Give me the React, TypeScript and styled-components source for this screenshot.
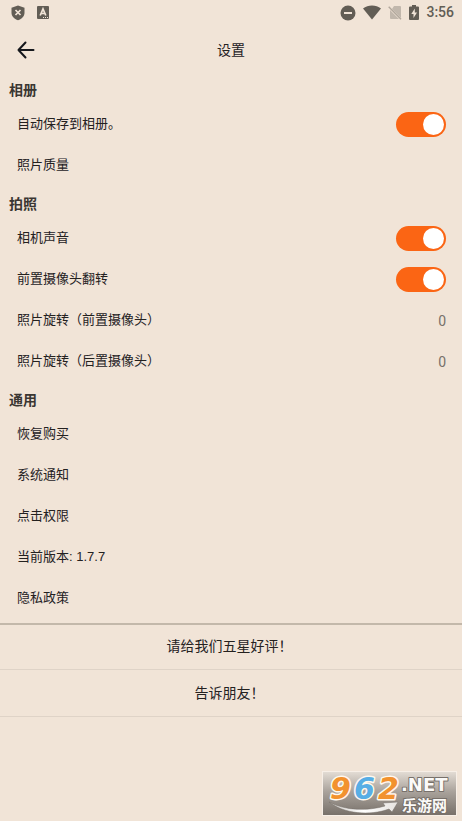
import React, { useState } from "react";
import styled, { createGlobalStyle } from "styled-components";

const GlobalStyle = createGlobalStyle`
  * { box-sizing: border-box; }
  body {
    margin: 0;
    background: #f1e4d7;
    color: #24211f;
    font-family: Roboto, "Noto Sans CJK SC", sans-serif;
  }
  button { font-family: inherit; color: inherit; }
`;

const Page = styled.div`
  position: relative;
  display: flex;
  flex-direction: column;
  min-height: 100vh;
`;

const StatusBar = styled.div`
  display: flex;
  align-items: center;
  justify-content: space-between;
  height: 25px;
  padding: 0 8px 0 10px;
  color: #625d55;
`;

const StatusGroup = styled.div<{ $gap: number }>`
  display: flex;
  align-items: center;
  gap: ${(p) => p.$gap}px;

  svg { display: block; }
`;

const Clock = styled.span`
  font-size: 14px;
  font-weight: 500;
  line-height: 25px;
`;

const Toolbar = styled.header`
  display: grid;
  grid-template-columns: 48px 1fr 48px;
  align-items: center;
  height: 50px;
`;

const BackButton = styled.button`
  display: flex;
  align-items: center;
  justify-content: center;
  height: 48px;
  padding: 0 0 0 4px;
  border: 0;
  background: none;
  color: #15171c;
`;

const Title = styled.h1`
  margin: 0;
  text-align: center;
  font-size: 14px;
  font-weight: 400;
  line-height: 20px;
`;

const Section = styled.section`
  & + & { margin-top: 3px; }
  &:last-of-type { padding-bottom: 4px; }
`;

const SectionTitle = styled.h2`
  margin: 0;
  padding: 1px 9px 0;
  font-size: 14px;
  font-weight: 700;
  line-height: 28px;
  color: #3a3632;
`;

const Row = styled.div`
  display: flex;
  align-items: center;
  justify-content: space-between;
  height: 41px;
  padding: 0 16px 0 17px;
  font-size: 13px;
`;

const RowButton = styled.button`
  display: flex;
  align-items: center;
  justify-content: space-between;
  width: 100%;
  height: 41px;
  padding: 0 16px 0 17px;
  border: 0;
  background: none;
  font-size: 13px;
  text-align: left;
`;

const RowLabel = styled.span`
  padding-bottom: 4px;
  font-family: "Liberation Sans", "Noto Sans CJK SC", sans-serif;
`;

const RowValue = styled.span`
  font-size: 14px;
  color: #77716a;
`;

const Switch = styled.input`
  appearance: none;
  display: flex;
  align-items: center;
  justify-content: flex-start;
  width: 50px;
  height: 25px;
  margin: 0;
  padding: 0 2px;
  border-radius: 13px;
  background: #b9b0a6;

  &::before {
    content: "";
    width: 21px;
    height: 21px;
    border-radius: 50%;
    background: #ffffff;
  }

  &:checked {
    justify-content: flex-end;
    background: #fb6514;
  }
`;

const Actions = styled.footer`
  border-top: 2px solid #c3b8aa;
`;

const ActionButton = styled.button`
  display: block;
  width: 100%;
  height: 47px;
  padding: 0 3px 0 0;
  border: 0;
  border-bottom: 1px solid #dfd3c7;
  background: none;
  font-size: 14px;
  line-height: 46px;

  &:first-child {
    height: 45px;
    line-height: 20px;
    padding-bottom: 2px;
  }
`;

const Watermark = styled.svg`
  position: absolute;
  right: 5px;
  bottom: 5px;
`;

const BackIcon = () => (
  <svg width="18" height="18" viewBox="0 0 18 18" fill="none" stroke="currentColor" strokeWidth="2" strokeLinecap="round" strokeLinejoin="round">
    <path d="M16.500 9H1.500M8.500 1.500L1.500 9l7 7.500" />
  </svg>
);

const ShieldIcon = () => (
  <svg width="16" height="16" viewBox="0 0 16 16">
    <path d="M8 .500l6.500 2.300v5c0 3.400-2.600 6.400-6.500 7.400-3.900-1-6.500-4-6.500-7.400v-5z" fill="currentColor" />
    <path d="M5.500 5l5 5m0-5l-5 5" stroke="#f1e4d7" strokeWidth="1.700" />
  </svg>
);

const LetterIcon = () => (
  <svg width="12" height="13" viewBox="0 0 12 13">
    <rect width="12" height="13" rx="1" fill="currentColor" />
    <path d="M3.200 9.500L6 3l2.800 6.500M4.200 7.500h3.600" fill="none" stroke="#f1e4d7" strokeWidth="1.700" />
    <path d="M6 11.500h1m1 0h1m1 0h1" stroke="#f1e4d7" />
  </svg>
);

const BlockIcon = () => (
  <svg width="16" height="16" viewBox="0 0 16 16">
    <circle cx="8" cy="8" r="7.500" fill="currentColor" />
    <path d="M4 8h8" stroke="#f1e4d7" strokeWidth="2" />
  </svg>
);

const WifiIcon = () => (
  <svg width="18" height="15" viewBox="0 0 18 15">
    <path d="M0 3.500C5 -.5 13 -.5 18 3.500L9 14.500z" fill="currentColor" />
  </svg>
);

const NoSimIcon = () => (
  <svg width="14" height="15" viewBox="0 0 14 15">
    <path d="M6 1h6a1 1 0 0 1 1 1v11L4 4zM2 5l9 9H3a1 1 0 0 1-1-1z" fill="#c1b7ac" />
    <path d="M.7 1.700l12.300 12.500" stroke="#b1a79c" strokeWidth="1.400" />
  </svg>
);

const BatteryIcon = () => (
  <svg width="10" height="15" viewBox="0 0 10 15">
    <path d="M3 0h4v1.500h2a1 1 0 0 1 1 1V14a1 1 0 0 1-1 1H1a1 1 0 0 1-1-1V2.500a1 1 0 0 1 1-1h2z" fill="currentColor" />
    <path d="M5.800 3.500L2.300 9h2.200v4L8 7.500H5.800z" fill="#f1e4d7" />
  </svg>
);

const SiteMark = () => (
  <Watermark width="135" height="45" viewBox="0 0 135 45" role="img" aria-label="962.NET 乐游网">
    <defs>
      <linearGradient id="plate" x1="0" y1="0" x2="0" y2="1">
        <stop offset="0" stopColor="#e4ddd5" />
        <stop offset="0.45" stopColor="#aaa39c" />
        <stop offset="1" stopColor="#777069" />
      </linearGradient>
      <linearGradient id="swoosh" x1="0" y1="0" x2="1" y2="0">
        <stop offset="0" stopColor="#c9c5c0" />
        <stop offset="0.5" stopColor="#ffffff" />
        <stop offset="1" stopColor="#e6e3df" />
      </linearGradient>
    </defs>
    <rect x="0.500" y="0.500" width="134" height="44" fill="url(#plate)" stroke="#f7efe7" />
    <path d="M7 31C24 40 46 40 63 35l-2-3 15-1-6 10-3-3C48 45 22 43 7 31z" fill="url(#swoosh)" stroke="#77706a" strokeWidth="0.500" />
    <g fontFamily="DejaVu Sans" fontWeight="700" paintOrder="stroke" strokeLinejoin="round">
      <g fontSize="30" fontStyle="italic" stroke="#fff8ee" strokeWidth="3">
        <text x="8" y="28" fill="#f2922e">9</text>
        <text x="32" y="28" fill="#58aee5">6</text>
        <text x="56" y="28" fill="#f2922e">2</text>
      </g>
      <text x="79" y="20" fontSize="18" fill="#fbfaf8" stroke="#77706a" strokeWidth="2">.NET</text>
    </g>
    <text x="80" y="40" fontSize="15" fontWeight="700" fontFamily="Noto Sans CJK SC" fill="#fbfaf8" stroke="#77706a" strokeWidth="2" paintOrder="stroke">乐游网</text>
  </Watermark>
);

const SwitchRow = ({ id, label }: { id: string; label: string }) => {
  const [on, setOn] = useState(true);
  return (
    <Row>
      <RowLabel as="label" htmlFor={id}>{label}</RowLabel>
      <Switch id={id} type="checkbox" role="switch" checked={on} onChange={(e) => setOn(e.target.checked)} />
    </Row>
  );
};

const LinkRow = ({ label, value }: { label: string; value?: string }) => (
  <RowButton type="button">
    <RowLabel>{label}</RowLabel>
    {value !== undefined && <RowValue>{value}</RowValue>}
  </RowButton>
);

export default function App() {
  return (
    <>
      <GlobalStyle />
      <Page>
        <StatusBar>
          <StatusGroup $gap={11}>
            <ShieldIcon />
            <LetterIcon />
          </StatusGroup>
          <StatusGroup $gap={7}>
            <BlockIcon />
            <WifiIcon />
            <NoSimIcon />
            <BatteryIcon />
            <Clock>3:56</Clock>
          </StatusGroup>
        </StatusBar>
        <Toolbar>
          <BackButton type="button" aria-label="返回">
            <BackIcon />
          </BackButton>
          <Title>设置</Title>
        </Toolbar>
        <main>
          <Section>
            <SectionTitle>相册</SectionTitle>
            <SwitchRow id="auto-save" label="自动保存到相册。" />
            <LinkRow label="照片质量" />
          </Section>
          <Section>
            <SectionTitle>拍照</SectionTitle>
            <SwitchRow id="camera-sound" label="相机声音" />
            <SwitchRow id="front-flip" label="前置摄像头翻转" />
            <LinkRow label="照片旋转（前置摄像头）" value="0" />
            <LinkRow label="照片旋转（后置摄像头）" value="0" />
          </Section>
          <Section>
            <SectionTitle>通用</SectionTitle>
            <LinkRow label="恢复购买" />
            <LinkRow label="系统通知" />
            <LinkRow label="点击权限" />
            <Row>
              <RowLabel>当前版本: 1.7.7</RowLabel>
            </Row>
            <LinkRow label="隐私政策" />
          </Section>
        </main>
        <Actions>
          <ActionButton type="button">请给我们五星好评！</ActionButton>
          <ActionButton type="button">告诉朋友！</ActionButton>
        </Actions>
        <SiteMark />
      </Page>
    </>
  );
}
